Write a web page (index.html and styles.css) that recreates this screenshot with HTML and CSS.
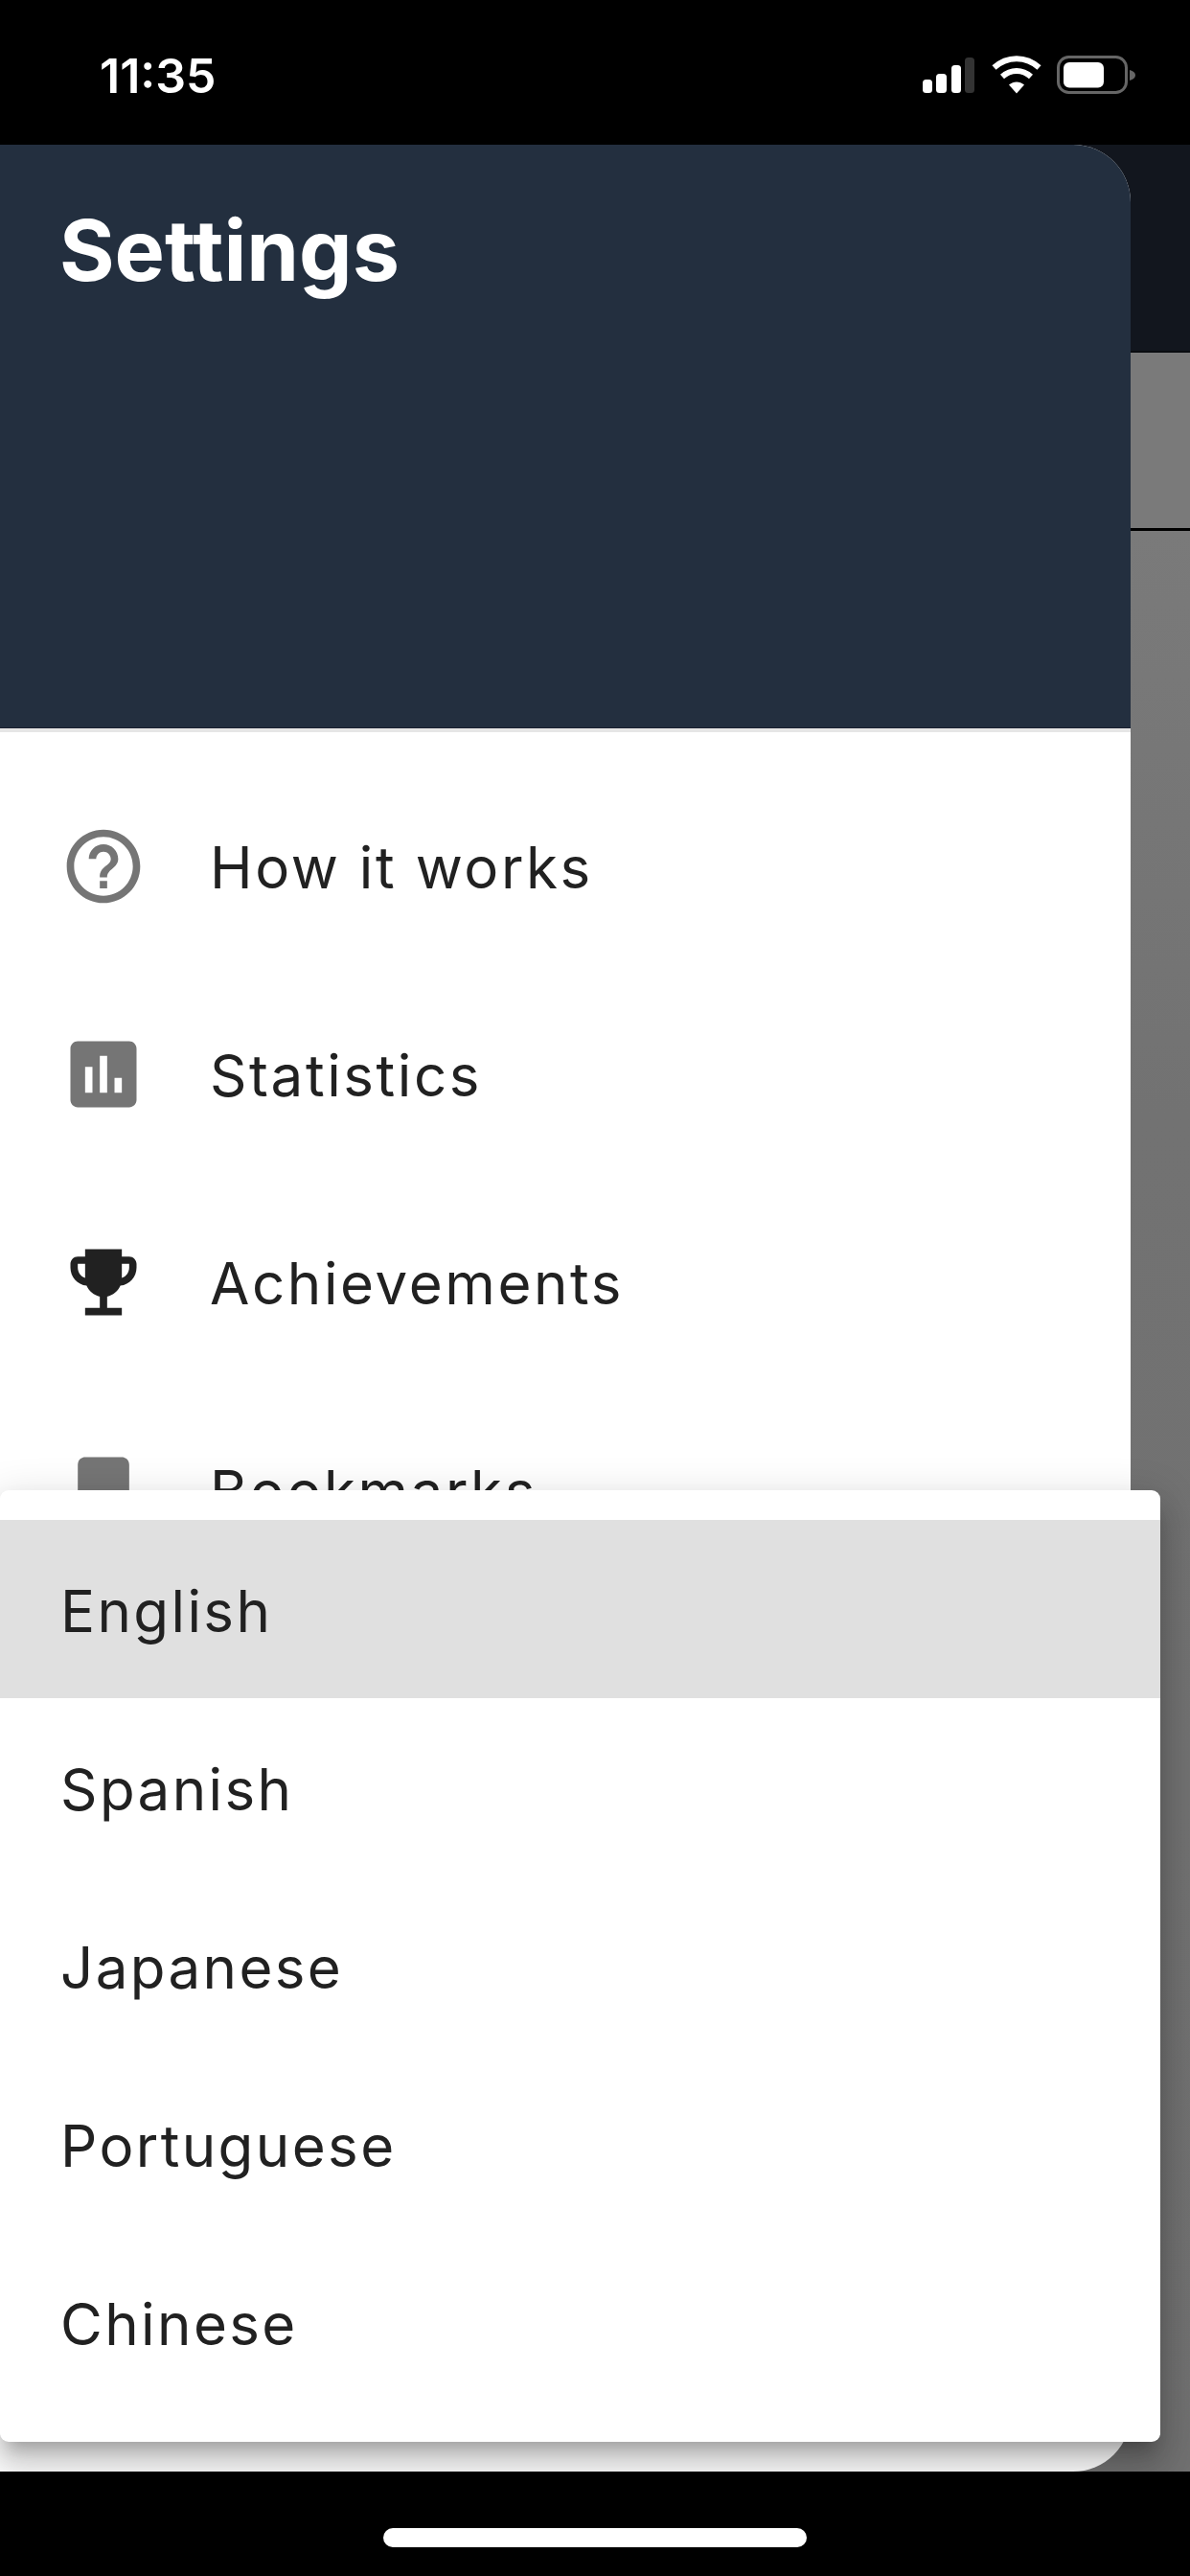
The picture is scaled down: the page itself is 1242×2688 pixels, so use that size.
FILE: index.html
```html
<!DOCTYPE html>
<html lang="en">
<head>
<meta charset="utf-8">
<title>Settings</title>
<link rel="stylesheet" href="styles.css">
</head>
<body>
<div class="phone">
  <header class="status">
    <span class="time">11:35</span>
    <svg class="status-icons" width="222" height="40" viewBox="963 58 222 40">
      <rect x="963" y="83" width="10" height="14" rx="3.5" fill="#fff"/>
      <rect x="977" y="77" width="11" height="20" rx="3.5" fill="#fff"/>
      <rect x="993" y="68" width="10" height="29" rx="3.5" fill="#fff"/>
      <rect x="1007" y="60" width="10" height="37" rx="3.5" fill="#333"/>
      <path d="M1037.5 70.5C1051 58 1071 58 1084.500 70.500" fill="none" stroke="#fff" stroke-width="6"/>
      <path d="M1046 80C1055 72 1067 72 1076 80" fill="none" stroke="#fff" stroke-width="6"/>
      <path d="M1053 88.500C1058 84.500 1064 84.500 1069 88.500L1061 97.500Z" fill="#fff"/>
      <rect x="1104.500" y="59.500" width="71" height="37" rx="11" fill="none" stroke="#666" stroke-width="3"/>
      <rect x="1110" y="65" width="42" height="26.500" rx="6" fill="#fff"/>
      <path d="M1179 73C1183 74 1185 76 1185 78.500C1185 81 1183 83 1179 84Z" fill="#666"/>
    </svg>
  </header>
  <main class="screen">
    <div class="backdrop-bar"></div>
    <div class="backdrop-tabs"></div>
    <div class="backdrop-body"></div>
    <aside class="drawer">
      <div class="drawer-head"><h1 class="drawer-title">Settings</h1></div>
      <ul class="nav">
        <li class="nav-row">
          <svg class="nav-icon icon-grey" viewBox="0 0 24 24"><path d="M11 18h2v-2h-2v2zm1-16C6.480 2 2 6.480 2 12s4.480 10 10 10 10-4.480 10-10S17.520 2 12 2zm0 18c-4.410 0-8-3.590-8-8s3.590-8 8-8 8 3.590 8 8-3.590 8-8 8zm0-14c-2.210 0-4 1.790-4 4h2c0-1.100.9-2 2-2s2 .9 2 2c0 2-3 1.750-3 5h2c0-2.250 3-2.500 3-5 0-2.210-1.790-4-4-4z"/></svg>
          <span class="nav-label">How it works</span>
        </li>
        <li class="nav-row">
          <svg class="nav-icon icon-grey" viewBox="0 0 24 24"><path d="M19 3H5c-1.100 0-2 .9-2 2v14c0 1.100.9 2 2 2h14c1.100 0 2-.9 2-2V5c0-1.100-.9-2-2-2zM9 17H7v-7h2v7zm4 0h-2V7h2v10zm4 0h-2v-4h2v4z"/></svg>
          <span class="nav-label">Statistics</span>
        </li>
        <li class="nav-row">
          <svg class="nav-icon icon-dark" viewBox="0 0 24 24"><path d="M19 5h-2V3H7v2H5c-1.100 0-2 .9-2 2v1c0 2.550 1.920 4.630 4.390 4.940.63 1.500 1.980 2.630 3.610 2.960V19H7v2h10v-2h-4v-3.100c1.630-.33 2.980-1.460 3.610-2.960C19.080 12.630 21 10.550 21 8V7c0-1.100-.9-2-2-2zM5 8V7h2v3.820C5.840 10.400 5 9.300 5 8zm14 0c0 1.300-.84 2.400-2 2.820V7h2v1z"/></svg>
          <span class="nav-label">Achievements</span>
        </li>
        <li class="nav-row">
          <svg class="nav-icon icon-grey" viewBox="0 0 24 24"><path d="M17 3H7c-1.100 0-1.990.9-1.990 2L5 21l7-3 7 3V5c0-1.100-.9-2-2-2z"/></svg>
          <span class="nav-label">Bookmarks</span>
        </li>
      </ul>
    </aside>
    <ul class="menu">
      <li class="menu-item is-selected">English</li>
      <li class="menu-item">Spanish</li>
      <li class="menu-item">Japanese</li>
      <li class="menu-item">Portuguese</li>
      <li class="menu-item">Chinese</li>
    </ul>
  </main>
  <footer class="home"><div class="home-bar"></div></footer>
</div>
</body>
</html>
```

FILE: styles.css
```css
* { box-sizing: border-box; }
html, body { margin: 0; padding: 0; background: #000; }
ul { list-style: none; margin: 0; padding: 0; }

.phone {
  width: 1242px;
  height: 2688px;
  display: flex;
  flex-direction: column;
  background: #000;
  overflow: hidden;
  font-family: Inter, sans-serif;
}

.status {
  height: 151px;
  flex: none;
  display: flex;
  justify-content: space-between;
  align-items: flex-start;
  padding: 58px 57px 0 104px;
}
.time {
  font-size: 50px;
  font-weight: 600;
  line-height: 42px;
  color: #fff;
}
.status-icons { display: block; }

.screen {
  position: relative;
  flex: 1;
  display: flex;
  flex-direction: column;
  overflow: hidden;
}
.backdrop-bar { height: 217px; flex: none; background: #12161e; border-bottom: 2px solid #0a0c10; }
.backdrop-tabs { height: 186px; flex: none; background: #7a7a7a; border-bottom: 3px solid #000; }
.backdrop-body { flex: 1; background: linear-gradient(#7a7a7a, #727272 30%, #707070); }

.drawer {
  position: absolute;
  left: 0;
  top: 0;
  bottom: 0;
  width: 1180px;
  background: #fff;
  border-radius: 0 60px 60px 0;
  overflow: hidden;
}
.drawer-head {
  height: 609px;
  padding: 60px 62px 0;
  background: #232f3f;
  border-bottom: 1px solid #1a2030;
}
.drawer-title {
  margin: 0;
  font-size: 88px;
  font-weight: 700;
  line-height: 100px;
  color: #fff;
}
.nav { padding-top: 31px; border-top: 4px solid #e6e6e6; }
.nav-row {
  height: 217px;
  display: flex;
  align-items: center;
  gap: 65px;
  padding-left: 62px;
  font-size: 60px;
  font-weight: 400;
  letter-spacing: 2.6px;
  color: #212121;
}
.nav-label { padding-top: 3px; }
.nav-icon { width: 92px; height: 92px; flex: none; }
.icon-grey { fill: #757575; }
.icon-dark { fill: #212121; }

.menu {
  position: absolute;
  left: 0;
  top: 1404px;
  width: 1211px;
  height: 993px;
  padding: 31px 0 32px;
  background: #fff;
  border-radius: 9px;
  box-shadow: 0 15px 15px -9px rgba(0,0,0,.2), 0 24px 30px 3px rgba(0,0,0,.14), 0 9px 42px 6px rgba(0,0,0,.12);
}
.menu-item {
  height: 186px;
  display: flex;
  align-items: center;
  padding: 3px 0 0 63px;
  font-size: 60px;
  letter-spacing: 2.4px;
  color: #212121;
}
.is-selected { background: #e0e0e0; }

.home {
  height: 109px;
  flex: none;
  display: flex;
  justify-content: center;
  padding-top: 59px;
  background: #000;
}
.home-bar { width: 442px; height: 20px; border-radius: 10px; background: #fff; }
```
